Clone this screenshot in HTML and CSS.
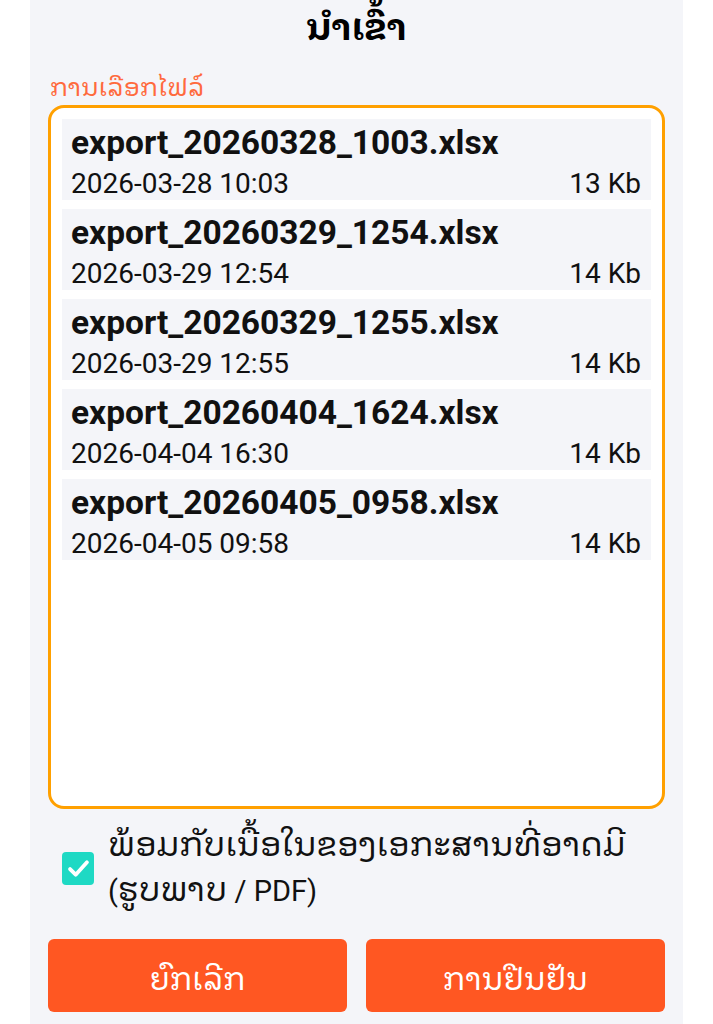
FILE: index.html
```html
<!DOCTYPE html>
<html lang="lo">

<head>
    <meta charset="UTF-8">
    <meta name="viewport" content="width=device-width, initial-scale=1.0">
    <title>ນຳເຂົ້າ</title>
    <link rel="stylesheet" href="styles.css">
</head>

<body>
    <div class="sheet">
        <h1 class="sheet-title">ນຳເຂົ້າ</h1>

        <div class="field-label">ການເລືອກໄຟລ໌</div>
        <div class="file-box">
            <div class="file-item">
                <div class="file-name">export_20260328_1003.xlsx</div>
                <div class="file-meta"><span>2026-03-28 10:03</span><span>13 Kb</span></div>
            </div>
            <div class="file-item">
                <div class="file-name">export_20260329_1254.xlsx</div>
                <div class="file-meta"><span>2026-03-29 12:54</span><span>14 Kb</span></div>
            </div>
            <div class="file-item">
                <div class="file-name">export_20260329_1255.xlsx</div>
                <div class="file-meta"><span>2026-03-29 12:55</span><span>14 Kb</span></div>
            </div>
            <div class="file-item">
                <div class="file-name">export_20260404_1624.xlsx</div>
                <div class="file-meta"><span>2026-04-04 16:30</span><span>14 Kb</span></div>
            </div>
            <div class="file-item">
                <div class="file-name">export_20260405_0958.xlsx</div>
                <div class="file-meta"><span>2026-04-05 09:58</span><span>14 Kb</span></div>
            </div>
        </div>

        <label class="check-row">
            <span class="check-box">
                <svg viewBox="0 0 24 24" width="27" height="27">
                    <path d="M4.5 12.5l5 5 10-11" fill="none" stroke="#fff" stroke-width="3.4" stroke-linecap="round" stroke-linejoin="round"/>
                </svg>
            </span>
            <span class="check-text"><span class="lao">ພ້ອມກັບເນື້ອໃນຂອງເອກະສານທີ່ອາດມີ</span> (<span class="lao">ຮູບພາບ</span> / PDF)</span>
        </label>

        <div class="actions">
            <button class="btn">ຍົກເລີກ</button>
            <button class="btn">ການຢືນຢັນ</button>
        </div>
    </div>
</body>

</html>
```

FILE: styles.css
```css
* {
    margin: 0;
    padding: 0;
    box-sizing: border-box;
}

body {
    background-color: #ffffff;
    font-family: Roboto, "Noto Sans Lao Looped", "Noto Sans Lao", "DejaVu Sans", sans-serif;
    color: #111;
    height: 1024px;
    overflow: hidden;
}

/* Grey bottom sheet */
.sheet {
    width: 653px;
    height: 1024px;
    margin: 0 30px;
    background: #f4f5f9;
    padding: 0 18px;
}

.sheet-title {
    text-align: center;
    font-size: 36px;
    font-weight: bold;
    line-height: 56px;
    color: #000;
}

.field-label {
    margin-top: 16px;
    padding-left: 2px;
    font-size: 25px;
    font-weight: normal;
    line-height: 32px;
    color: #ff6a3d;
}

/* File list */
.file-box {
    height: 704px;
    margin-top: 1px;
    border: 3px solid #ffa000;
    border-radius: 16px;
    background: #fff;
    padding: 11px;
    display: flex;
    flex-direction: column;
    gap: 9px;
}

.file-item {
    height: 81px;
    background: #f4f5f9;
    padding: 5px 10px 0 9px;
}

.file-name {
    font-size: 33.5px;
    font-weight: bold;
    line-height: 38px;
    color: #111;
}

.file-meta {
    margin-top: 6px;
    display: flex;
    justify-content: space-between;
    font-size: 28px;
    line-height: 32px;
    color: #111;
}

/* Checkbox row */
.check-row {
    margin-top: 14px;
    display: flex;
    align-items: center;
    padding-left: 14px;
    gap: 14px;
}

.check-box {
    flex: none;
    width: 32px;
    height: 33px;
    border-radius: 4px;
    background: #1ed9c4;
    display: flex;
    align-items: center;
    justify-content: center;
}

.check-text {
    font-size: 29px;
    line-height: 43px;
    color: #111;
}

.check-text .lao {
    font-size: 33px;
}

/* Bottom buttons */
.actions {
    margin-top: 26px;
    display: flex;
    gap: 19px;
}

.btn {
    flex: 1;
    height: 73px;
    border: none;
    border-radius: 6px;
    background: #ff5722;
    color: #fff;
    font-family: Roboto, "Noto Sans Lao Looped", "Noto Sans Lao", "DejaVu Sans", sans-serif;
    font-size: 31px;
}
```
